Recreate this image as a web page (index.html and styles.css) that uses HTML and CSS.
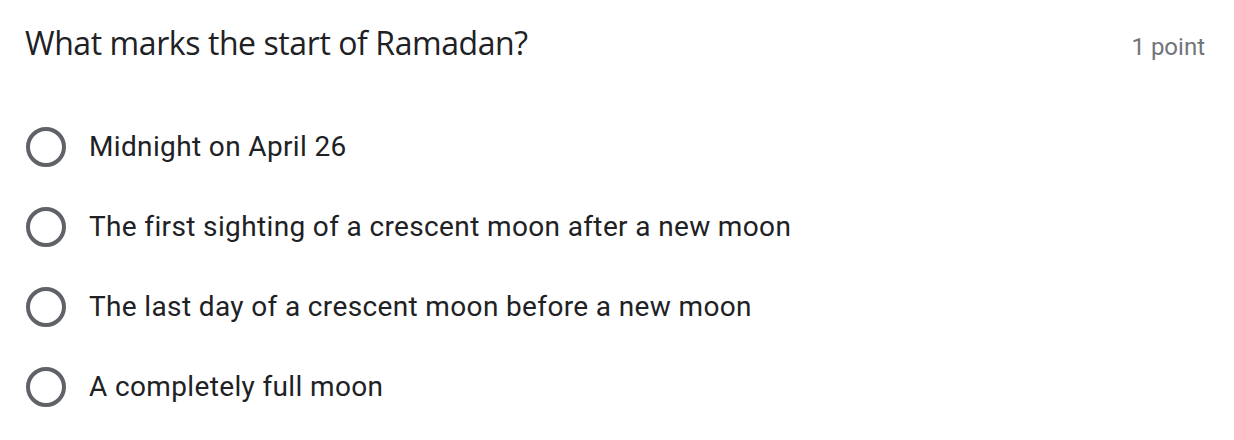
FILE: index.html
```html
<!DOCTYPE html>
<html lang="en">
<head>
<meta charset="utf-8">
<title>Question</title>
<link rel="stylesheet" href="styles.css">
</head>
<body>
<div class="question">
  <div class="header">
    <div class="title">What marks the start of Ramadan?</div>
    <div class="points">1 point</div>
  </div>
  <div class="options">
    <label class="option"><span class="radio"></span><span class="label">Midnight on April 26</span></label>
    <label class="option"><span class="radio"></span><span class="label">The first sighting of a crescent moon after a new moon</span></label>
    <label class="option"><span class="radio"></span><span class="label">The last day of a crescent moon before a new moon</span></label>
    <label class="option"><span class="radio"></span><span class="label">A completely full moon</span></label>
  </div>
</div>
</body>
</html>
```
FILE: styles.css
```css
html, body {
  margin: 0;
  padding: 0;
  background: #ffffff;
}
.question {
  padding: 21px 29px 0 25px;
  font-family: Roboto, "Liberation Sans", sans-serif;
  color: #202124;
}
.header {
  display: flex;
  justify-content: space-between;
  align-items: baseline;
  height: 56px;
}
.title {
  font-family: "Open Sans", Roboto, sans-serif;
  font-size: 32px;
  line-height: 44px;
  letter-spacing: -0.42px;
}
.points {
  font-size: 24px;
  line-height: 44px;
  color: #70757a;
}
.options {
  display: flex;
  flex-direction: column;
  padding-top: 30px;
}
.option {
  display: flex;
  align-items: center;
  height: 80px;
}
.radio {
  box-sizing: border-box;
  width: 40px;
  height: 40px;
  border: 4px solid #5f6368;
  border-radius: 50%;
  margin-left: 1px;
  margin-right: 23px;
  flex: none;
}
.label {
  font-size: 28px;
  line-height: 40px;
  letter-spacing: 0.36px;
}
```
